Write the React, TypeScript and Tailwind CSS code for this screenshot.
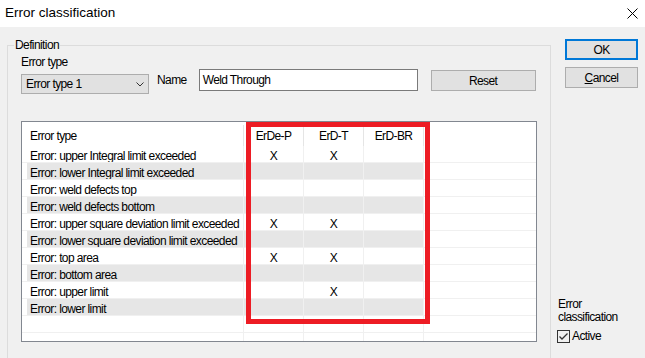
const narrow = { fontFamily: '"Liberation Sans Narrow", "Liberation Sans", Arial, sans-serif' };

type Row = { label: string; marks: [boolean, boolean, boolean] };

const rows: Row[] = [
  { label: 'Error: upper Integral limit exceeded', marks: [true, true, false] },
  { label: 'Error: lower Integral limit exceeded', marks: [false, false, false] },
  { label: 'Error: weld defects top', marks: [false, false, false] },
  { label: 'Error: weld defects bottom', marks: [false, false, false] },
  { label: 'Error: upper square deviation limit exceeded', marks: [true, true, false] },
  { label: 'Error: lower square deviation limit exceeded', marks: [false, false, false] },
  { label: 'Error: top area', marks: [true, true, false] },
  { label: 'Error: bottom area', marks: [false, false, false] },
  { label: 'Error: upper limit', marks: [false, true, false] },
  { label: 'Error: lower limit', marks: [false, false, false] },
];

const columns = ['ErDe-P', 'ErD-T', 'ErD-BR'];

function CloseIcon() {
  return (
    <svg width="11" height="11" viewBox="0 0 11 11" aria-hidden="true">
      <path d="M0.5 0.5 L10.5 10.5 M10.5 0.5 L0.5 10.5" stroke="#000" strokeWidth="1" fill="none" />
    </svg>
  );
}

function Chevron() {
  return (
    <svg width="8" height="5" viewBox="0 0 8 5" aria-hidden="true">
      <path d="M0.5 0.5 L4 4 L7.5 0.5" stroke="#333" strokeWidth="1" fill="none" />
    </svg>
  );
}

function CheckMark() {
  return (
    <svg width="11" height="11" viewBox="0 0 11 11" aria-hidden="true">
      <path d="M1.5 5.5 L4 8 L9.5 2.5" stroke="#333" strokeWidth="1.3" fill="none" />
    </svg>
  );
}

function TableRow({ row, index }: { row: Row; index: number }) {
  const shaded = index % 2 === 1 ? 'bg-[#e6e6e6]' : 'bg-white';
  return (
    <div className="flex h-[17px] leading-[16px]">
      <div className="w-[5px] shrink-0 border-b border-[#f0f0f0]" />
      <div className={`w-[217px] shrink-0 overflow-hidden border-r border-b border-[#f0f0f0] pt-[2px] pl-[3px] whitespace-nowrap ${shaded}`}>
        {row.label}
      </div>
      {row.marks.map((mark, i) => (
        <div
          key={i}
          className={`w-[60px] shrink-0 overflow-hidden border-r border-b border-[#f0f0f0] pt-[2px] text-center font-light ${shaded}`}
        >
          {mark ? 'X' : ''}
        </div>
      ))}
      <div className="flex-1 border-b border-[#f0f0f0]" />
    </div>
  );
}

export default function App() {
  return (
    <div
      className="flex h-[358px] w-[645px] flex-col overflow-hidden bg-[#f0f0f0] text-[12px] tracking-[-0.6px] text-black"
      style={narrow}
    >
      <div className="flex h-[27px] shrink-0 items-center justify-between bg-white pr-[7px] pl-[5px]">
        <span className="text-[13.5px] tracking-normal" style={{ fontFamily: '"Liberation Sans", Arial, sans-serif' }}>
          Error classification
        </span>
        <CloseIcon />
      </div>

      <div className="flex min-h-0 flex-1">
        <fieldset className="mt-[11px] ml-[7px] h-[330px] w-[544px] shrink-0 border border-[#dcdcdc]">
          <legend className="ml-[6px] px-[1px] leading-[14px]">Definition</legend>
          <div className="pt-[3px] pl-[13px]">
            <div className="flex items-start">
              <div className="flex w-[128px] flex-col">
                <span className="leading-[14px]">Error type</span>
                <div className="mt-[5px] flex h-[20px] items-center justify-between border border-[#adadad] bg-[#e1e1e1] pr-[4px] pl-[4px]">
                  <span>Error type 1</span>
                  <Chevron />
                </div>
              </div>
              <span className="mt-[18px] ml-[8px] leading-[14px]">Name</span>
              <div className="mt-[14px] ml-[12px] flex h-[22px] w-[219px] items-center border border-[#7a7a7a] bg-white pl-[3px]">
                Weld Through
              </div>
              <div className="mt-[15px] ml-[13px] flex h-[21px] w-[105px] items-center justify-center border border-[#adadad] bg-[#e1e1e1]">
                Reset
              </div>
            </div>

            <div className="relative mt-[27px] flex h-[221px] w-[516px] flex-col border border-[#828790] bg-white">
              <div className="flex h-[24px] shrink-0 items-center pt-[3px]">
                <div className="flex h-full w-[222px] shrink-0 items-center border-r border-[#e5e5e5] pl-[8px]">
                  Error type
                </div>
                {columns.map((c) => (
                  <div key={c} className="flex h-full w-[60px] shrink-0 items-center justify-center border-r border-[#e5e5e5]">
                    {c}
                  </div>
                ))}
              </div>
              {rows.map((row, i) => (
                <TableRow key={row.label} row={row} index={i} />
              ))}
              <div className="flex h-[17px] shrink-0">
                <div className="w-[222px] shrink-0 border-r border-b border-[#f0f0f0]" />
                <div className="w-[60px] shrink-0 border-r border-b border-[#f0f0f0]" />
                <div className="w-[60px] shrink-0 border-r border-b border-[#f0f0f0]" />
                <div className="w-[60px] shrink-0 border-r border-b border-[#f0f0f0]" />
                <div className="flex-1 border-b border-[#f0f0f0]" />
              </div>
              <div className="flex flex-1">
                <div className="w-[222px] shrink-0 border-r border-[#f0f0f0]" />
                <div className="w-[60px] shrink-0 border-r border-[#f0f0f0]" />
                <div className="w-[60px] shrink-0 border-r border-[#f0f0f0]" />
                <div className="w-[60px] shrink-0 border-r border-[#f0f0f0]" />
              </div>
              <div className="pointer-events-none absolute top-0 left-[224px] h-[202px] w-[184px] border-[5px] border-[#ed1c24]" />
            </div>
          </div>
        </fieldset>

        <div className="ml-[6px] flex w-[88px] flex-col pt-[12px] pb-[15px]">
          <div className="ml-[8px] flex h-[21px] w-[73px] items-center justify-center border-2 border-[#0078d7] bg-[#e1e1e1]">
            OK
          </div>
          <div className="mt-[7px] ml-[8px] flex h-[21px] w-[73px] items-center justify-center border border-[#adadad] bg-[#e1e1e1]">
            <span>
              <u>C</u>ancel
            </span>
          </div>
          <div className="mt-auto pl-[1px] leading-[13px]">
            <div>Error</div>
            <div>classification</div>
          </div>
          <div className="mt-[6px] flex items-center">
            <div className="flex h-[13px] w-[13px] items-center justify-center border border-[#333]">
              <CheckMark />
            </div>
            <span className="ml-[2px] leading-[13px]">Active</span>
          </div>
        </div>
      </div>
    </div>
  );
}
